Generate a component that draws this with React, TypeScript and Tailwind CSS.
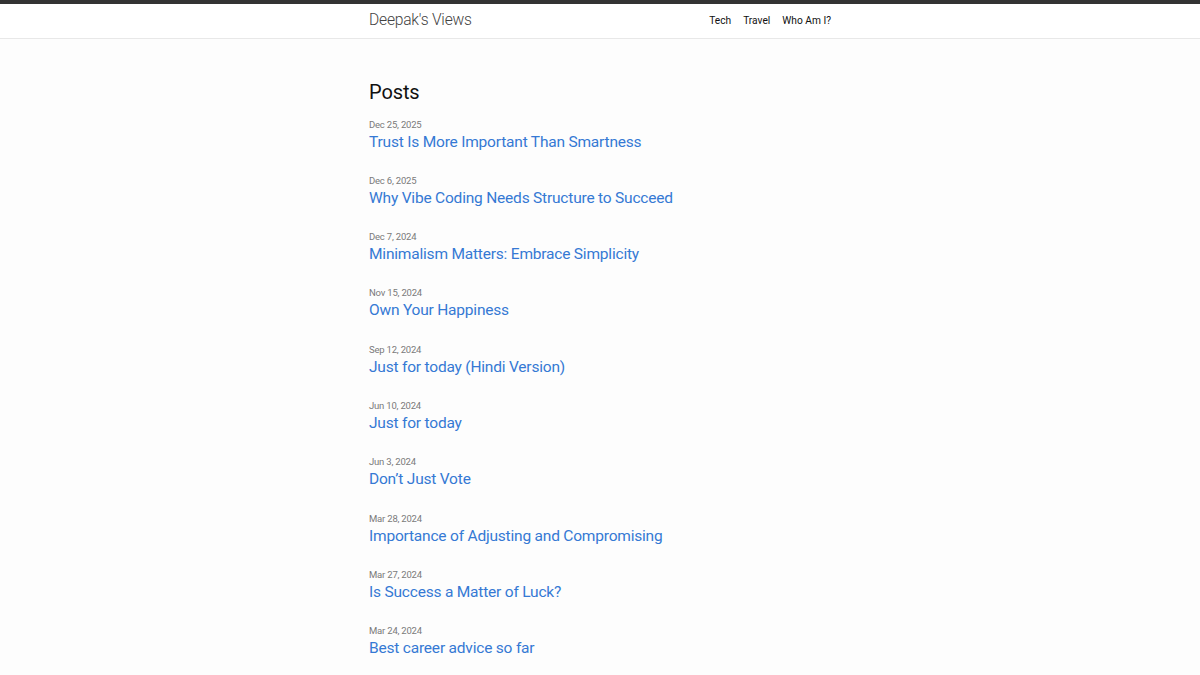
const posts = [
  { date: 'Dec 25, 2025', title: 'Trust Is More Important Than Smartness' },
  { date: 'Dec 6, 2025', title: 'Why Vibe Coding Needs Structure to Succeed' },
  { date: 'Dec 7, 2024', title: 'Minimalism Matters: Embrace Simplicity' },
  { date: 'Nov 15, 2024', title: 'Own Your Happiness' },
  { date: 'Sep 12, 2024', title: 'Just for today (Hindi Version)' },
  { date: 'Jun 10, 2024', title: 'Just for today' },
  { date: 'Jun 3, 2024', title: 'Don’t Just Vote' },
  { date: 'Mar 28, 2024', title: 'Importance of Adjusting and Compromising' },
  { date: 'Mar 27, 2024', title: 'Is Success a Matter of Luck?' },
  { date: 'Mar 24, 2024', title: 'Best career advice so far' },
]

export default function App() {
  return (
    <div className="min-h-screen bg-[#fdfdfd] text-[#111]" style={{ fontFamily: 'Roboto, "Liberation Sans", sans-serif' }}>
      <header className="border-t-4 border-t-[#333] border-b border-b-[#e8e8e8] bg-white">
        <div className="mx-auto flex h-[34px] w-[462px] items-center justify-between">
          <a className="text-[15.6px] font-light tracking-[-0.2px] text-[#424242]">Deepak's Views</a>
          <nav className="flex gap-[12px] text-[10.2px] text-[#111]">
            <a>Tech</a>
            <a>Travel</a>
            <a>Who Am I?</a>
          </nav>
        </div>
      </header>

      <main className="mx-auto w-[462px] pt-[40px]">
        <h1 className="mb-[11.5px] text-[20px] leading-[26px] font-normal tracking-[-0.1px]">Posts</h1>
        <ul className="flex flex-col gap-[20.3px]">
          {posts.map((post) => (
            <li key={post.title}>
              <div className="text-[9.5px] leading-[15px] tracking-[-0.2px] text-[#7a7a7a]">{post.date}</div>
              <a className="block text-[15.5px] leading-[21px] tracking-[-0.2px] text-[#3579d4]">{post.title}</a>
            </li>
          ))}
        </ul>
      </main>
    </div>
  )
}
